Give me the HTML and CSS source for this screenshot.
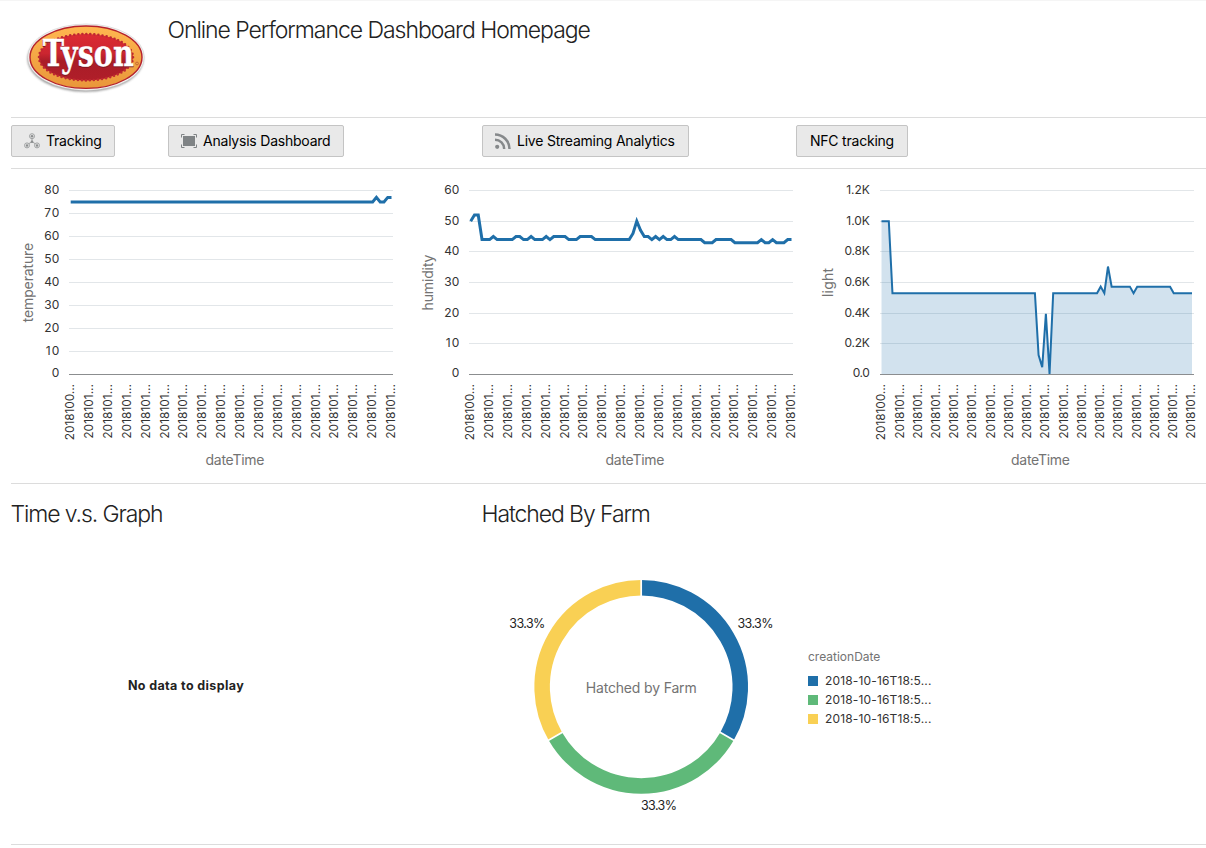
FILE: index.html
```html
<!DOCTYPE html>
<html lang="en">
<head>
<meta charset="utf-8">
<title>Online Performance Dashboard Homepage</title>
<link rel="stylesheet" href="styles.css">
</head>
<body>
<main class="page">
  <header class="row header">
    <div class="brand">
      <svg class="logo" width="157" height="116" viewBox="11 1 157 116" role="img" aria-label="Tyson">
        <defs>
          <linearGradient id="red" x1="0" y1="0" x2="0" y2="1"><stop offset="0" stop-color="#dc2b33"/><stop offset=".42" stop-color="#cb2630"/><stop offset=".58" stop-color="#a91d28"/><stop offset="1" stop-color="#b01e29"/></linearGradient>
          <linearGradient id="gold" x1="0" y1="0" x2="0" y2="1"><stop offset="0" stop-color="#ffb750"/><stop offset="1" stop-color="#e9963a"/></linearGradient>
          <filter id="soft" x="-20%" y="-20%" width="140%" height="150%"><feGaussianBlur stdDeviation="1.1"/></filter>
        </defs>
        <ellipse cx="85.5" cy="58.8" rx="58" ry="33" fill="#777" opacity=".75" filter="url(#soft)"/>
        <ellipse cx="86" cy="57.2" rx="58.2" ry="33.2" fill="#f4f3f2" stroke="#c9c9c9" stroke-width=".5"/>
        <ellipse cx="86" cy="57.2" rx="56" ry="31.2" fill="url(#gold)" stroke="#b5222c" stroke-width="1.4"/>
        <ellipse cx="86" cy="57.2" rx="47" ry="23.2" fill="url(#red)"/>
        <ellipse cx="86" cy="57.2" rx="47" ry="23.2" fill="none" stroke="#bf2831" stroke-width="2.600" stroke-linecap="round" stroke-dasharray="0 4.05"/>
        <text class="logo-shadow" x="42.400" y="67.200" textLength="91.500" lengthAdjust="spacingAndGlyphs">Tyson</text>
        <text class="logo-text" x="42.800" y="66" textLength="91" lengthAdjust="spacingAndGlyphs">Tyson</text>
        <circle cx="137" cy="63.500" r="1.400" fill="none" stroke="#b4532f" stroke-width=".7"/>
      </svg>
    </div>
    <h1 class="title">Online Performance Dashboard Homepage</h1>
  </header>

  <nav class="row actions">
    <div class="cell"><button class="btn b1">
      <svg class="icon" width="16" height="16" viewBox="0 0 16 16" fill="none" stroke="#a0a2a3"><path d="M8 5v4M8 8.600l-3.300 2.200M8 8.600l3.300 2.200"/><circle cx="8" cy="3.200" r="2.500"/><circle cx="3" cy="12.400" r="2.500"/><circle cx="13" cy="12.400" r="2.500"/><g fill="#8b8d8e" stroke="none"><circle cx="8" cy="3.200" r="1.250"/><circle cx="3" cy="12.400" r="1.250"/><circle cx="13" cy="12.400" r="1.250"/><circle cx="8" cy="8.700" r="1.300"/></g></svg>
      <span>Tracking</span></button></div>
    <div class="cell"><button class="btn b2">
      <svg class="icon" width="16" height="16" viewBox="0 0 16 16"><path d="M2 3h12v10H2z" fill="#7f8385"/><path d="M.5 4.500v-3h3M12.500 1.500h3v3M15.500 11.500v3h-3M3.500 14.500h-3v-3" fill="none" stroke="#7f8385"/></svg>
      <span>Analysis Dashboard</span></button></div>
    <div class="cell"><button class="btn b3">
      <svg class="icon" width="16" height="16" viewBox="0 0 16 16" fill="none" stroke="#86898b" stroke-width="2.500"><circle cx="2.200" cy="13.800" r="2.100" fill="#86898b" stroke="none"/><path d="M0 6.700a9.200 9.200 0 0 1 9.200 9.200M0 1.500a14.500 14.500 0 0 1 14.500 14.500"/></svg>
      <span>Live Streaming Analytics</span></button></div>
    <div class="cell"><button class="btn b4"><span>NFC tracking</span></button></div>
  </nav>

  <section class="row charts">
    <svg class="chart" id="temperature" width="400" height="314" viewBox="11 169 400 314"></svg>
    <svg class="chart" id="humidity" width="400" height="314" viewBox="411 169 400 314"></svg>
    <svg class="chart" id="light" width="395" height="314" viewBox="811 169 395 314"></svg>
  </section>

  <section class="row panels">
    <div class="panel">
      <h2 class="heading h-time">Time v.s. Graph</h2>
      <p class="empty">No data to display</p>
    </div>
    <div class="panel">
      <h2 class="heading h-farm">Hatched By Farm</h2>
      <div class="farm">
        <svg class="donut" width="314" height="260" viewBox="482 565 314 260">
          <g fill="none" stroke-width="15.500">
            <path stroke="#1f6fa9" d="M641.200 587.700A99.100 99.100 0 0 1 727.020 736.350"/>
            <path stroke="#5fb979" d="M727.020 736.350A99.100 99.100 0 0 1 555.380 736.350"/>
            <path stroke="#f9d054" d="M555.380 736.350A99.100 99.100 0 0 1 641.200 587.700"/>
          </g>
          <path d="M641.200 686.800V575M641.200 686.800L738.200 742.800M641.200 686.800L544.200 742.800" stroke="#fff" stroke-width="1.700"/>
          <text class="value" x="509.300" y="628" textLength="36">33.3%</text>
          <text class="value" x="737.500" y="628" textLength="36">33.3%</text>
          <text class="value" x="641" y="810" textLength="36">33.3%</text>
          <text class="axis-title" x="585.700" y="693" textLength="111">Hatched by Farm</text>
        </svg>
        <div class="legend">
          <div class="legend-title">creationDate</div>
          <div class="legend-item"><i class="swatch blue"></i><span>2018-10-16T18:5...</span></div>
          <div class="legend-item"><i class="swatch green"></i><span>2018-10-16T18:5...</span></div>
          <div class="legend-item"><i class="swatch yellow"></i><span>2018-10-16T18:5...</span></div>
        </div>
      </div>
    </div>
  </section>
</main>
<script src="charts.js"></script>
</body>
</html>
```
FILE: styles.css
```css
* { box-sizing: border-box; }
body { margin: 0; background: #fff; color: #222; font-family: Inter, "Liberation Sans", sans-serif; }
.page { height: 848px; padding-left: 11px; overflow: hidden; box-shadow: inset 0 1px #f5f5f5; }
.row { border-bottom: 1px solid #dcdcdc; }
.header { display: flex; height: 118px; padding-top: 1px; }
.brand { flex: 0 0 157px; }
.logo { display: block; }
.logo-text, .logo-shadow { font: bold 37px "DejaVu Serif", serif; fill: #fff; stroke: #fff; stroke-width: .4px; }
.logo-shadow { fill: #7c1820; stroke: #7c1820; }
.title, .heading { margin: 0; font-weight: 300; font-size: 23px; line-height: 28px; white-space: nowrap; }
.title { padding-top: 15px; margin-left: -.5px; letter-spacing: -1.04px; }
.actions { display: grid; grid-template-columns: 157px 314px 314px 1fr; height: 51px; padding-top: 7px; }
.btn { display: flex; align-items: center; gap: 6px; height: 32px; padding: 0 0 0 12px; border: 1px solid #c4c4c4; border-radius: 2px; background: #e9e9e9; color: #000; font: 14px/20px Inter, "Liberation Sans", sans-serif; letter-spacing: -.22px; white-space: nowrap; }
.icon { flex: none; }
.b1 { width: 104px; }
.b2 { width: 176px; }
.b3 { width: 207px; }
.b4 { width: 112px; padding-left: 13px; }
.charts { display: flex; height: 315px; }
.chart { display: block; flex: none; }
.grid { stroke: #e2e6e9; }
.axis { stroke: #8b8d8f; }
.series { fill: none; stroke: #1f6fa9; stroke-linejoin: miter; }
.area { fill: #1f6fa9; fill-opacity: .2; }
.tick { font-size: 12px; fill: #333; }
.value { font-size: 12.5px; fill: #222; }
.axis-title { font-size: 14px; fill: #737373; }
.panels { display: grid; grid-template-columns: 471px 1fr; height: 361px; }
.heading { padding-top: 16px; height: 44px; margin-left: -.5px; letter-spacing: -1.1px; }
.empty { width: 350px; margin: 150px 0 0; text-align: center; font-size: 12.5px; letter-spacing: .38px; line-height: 16px; font-weight: 700; }
.farm { display: flex; padding-top: 37px; }
.donut { display: block; }
.legend { padding: 84px 0 0 12px; font-size: 12px; line-height: 16px; }
.legend-title { margin-bottom: 6px; color: #737373; }
.legend-item { display: flex; align-items: center; gap: 7px; height: 19px; color: #333; letter-spacing: .15px; }
.swatch { width: 10px; height: 10px; }
.blue { background: #1f6fa9; }
.green { background: #5fb979; }
.yellow { background: #f9d054; }
```
FILE: charts.js
```js
// Runs are [value, count] pairs; each expands to consecutive samples.
const expand = runs => runs.flatMap(([v, n]) => Array(n).fill(v));

const charts = [
  { id: 'temperature', left: 69, right: 393, x0: 70.7, x1: 391.5, max: 80, ticks: [80, 70, 60, 50, 40, 30, 20, 10, 0],
    labelRight: 59.3, digit: 7.5, tickX0: 74.2, tickX1: 395.1, nameX: 33, nameY: 322.3, nameLen: 79.5, titleX: 205.5, width: 3,
    data: expand([[75, 81], [77, 1], [75, 2], [77, 2]]) },
  { id: 'humidity', left: 469, right: 793, x0: 470.7, x1: 791.5, max: 60, ticks: [60, 50, 40, 30, 20, 10, 0],
    labelRight: 459.3, digit: 7.5, tickX0: 474.2, tickX1: 795.1, nameX: 433, nameY: 310.5, nameLen: 56, titleX: 605.5, width: 3,
    data: expand([[50, 1], [52, 2], [44, 3], [45, 1], [44, 5], [45, 2], [44, 2], [45, 1], [44, 3], [45, 1], [44, 1], [45, 4], [44, 3], [45, 4], [44, 10], [46, 1], [50, 1], [47, 1], [45, 2], [44, 1], [45, 1], [44, 1], [45, 1], [44, 2], [45, 1], [44, 7], [43, 3], [44, 5], [43, 7], [44, 1], [43, 2], [44, 1], [43, 3], [44, 2]]) },
  { id: 'light', left: 880, right: 1194, x0: 881.5, x1: 1192, max: 1200, ticks: ['1.2K', '1.0K', '0.8K', '0.6K', '0.4K', '0.2K', '0.0'],
    labelRight: 869.8, tickX0: 885.3, tickX1: 1195.3, nameX: 833, nameY: 297, nameLen: 29, titleX: 1011, width: 2, area: true,
    data: expand([[1000, 3], [530, 40], [127, 1], [48, 1], [395, 1], [4, 1], [530, 13], [573, 1], [530, 1], [704, 1], [573, 6], [530, 1], [573, 10], [530, 6]]) }
];

const TOP = 190, BASE = 374;

for (const c of charts) {
  const out = [];
  const steps = c.ticks.length - 1;
  c.ticks.forEach((t, i) => {
    const y = Math.round(TOP + (BASE - TOP) * i / steps + .15);
    if (i < steps) out.push(`<path class="grid" d="M${c.left} ${y + .5}H${c.right}"/>`);
    const s = String(t);
    const len = c.digit ? s.length * c.digit - (s === '10' ? 1.5 : 0) : (s[0] === '1' ? 23.5 : s.length === 4 ? 25.2 : 17);
    out.push(`<text class="tick" x="${c.labelRight - len}" y="${i < steps ? y + 4 : y + 3}" textLength="${len}">${s}</text>`);
  });
  const pts = c.data.map((v, i) =>
    [(c.x0 + (c.x1 - c.x0) * i / (c.data.length - 1)).toFixed(2), (BASE + .5 - v * (BASE - TOP) / c.max).toFixed(2)].join());
  if (c.area) out.push(`<polygon class="area" points="${c.x0},${BASE} ${pts.join(' ')} ${c.x1},${BASE}"/>`);
  out.push(`<polyline class="series" stroke-width="${c.width}" points="${pts.join(' ')}"/>`);
  out.push(`<path class="axis" d="M${c.left} ${BASE + .5}H${c.right}"/>`);
  for (let i = 0; i < 18; i++) {
    const x = c.tickX0 + (c.tickX1 - c.tickX0) * i / 17;
    const y = i ? 438.7 : 440.2;
    out.push(`<text class="tick" transform="translate(${x.toFixed(2)} ${y}) rotate(-90)" textLength="${y - 384}" lengthAdjust="spacingAndGlyphs">${i ? '2018101...' : '2018100...'}</text>`);
  }
  out.push(`<text class="axis-title" transform="translate(${c.nameX} ${c.nameY}) rotate(-90)" textLength="${c.nameLen}">${c.id}</text>`);
  out.push(`<text class="axis-title" x="${c.titleX}" y="465" textLength="59">dateTime</text>`);
  document.getElementById(c.id).innerHTML = out.join('');
}
```
